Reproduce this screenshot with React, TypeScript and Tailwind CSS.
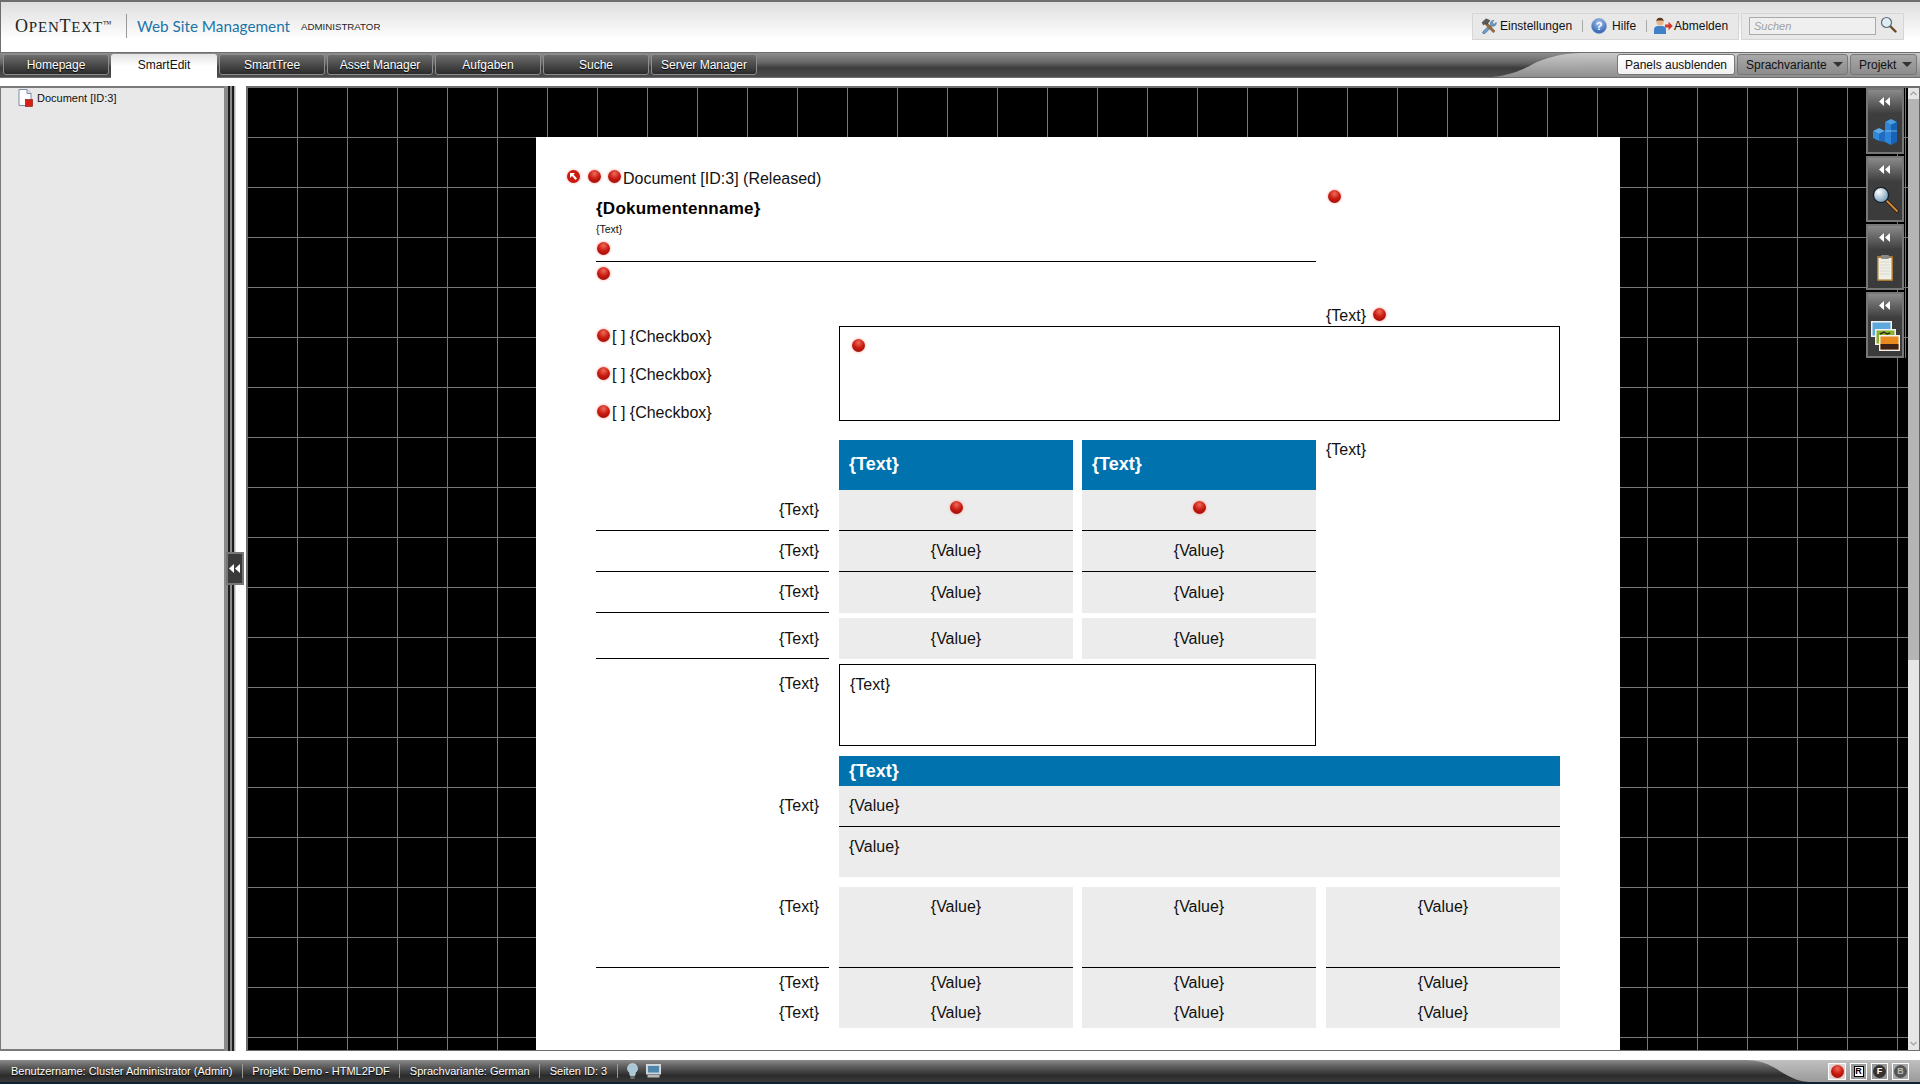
import React from 'react';

const tabs = ['Homepage', 'SmartEdit', 'SmartTree', 'Asset Manager', 'Aufgaben', 'Suche', 'Server Manager'];

const Dot: React.FC<{ className?: string }> = ({ className = '' }) => (
  <span
    className={`block h-[13px] w-[13px] shrink-0 rounded-full bg-[radial-gradient(circle_at_50%_28%,#ee6a58,#c81a10_48%,#8c0a05)] shadow-[0_0_3px_#ff9a90] ${className}`}
  />
);

const DoubleLeft: React.FC = () => (
  <svg width="12" height="9" viewBox="0 0 12 9" className="block">
    <polygon points="5,0 5,9 0,4.5" fill="#fff" />
    <polygon points="11,0 11,9 6,4.5" fill="#fff" />
  </svg>
);

const ToolsIcon = () => (
  <svg width="16" height="16" viewBox="0 0 16 16" className="block">
    <path d="M13 2.500 a3 3 0 0 0-3.500 3.800 L2 13.500 a1.300 1.300 0 0 0 2 2 l7.400-7.500 a3 3 0 0 0 3.800-3.600 l-2 1.800 -1.600-.6 -.3-1.600z" fill="#6d9cc8" stroke="#3f6a94" strokeWidth=".6" />
    <path d="M5.500 4 L14 13 l-1.600 1.800 L3.600 6z" fill="#9b6a3a" stroke="#5f3d1e" strokeWidth=".4" />
    <path d="M1 4.500 L5 .8 l4 1.600 -3 4 -1.600-1 -2 1.600z" fill="#5a5a5a" stroke="#2c2c2c" strokeWidth=".4" />
  </svg>
);

const HelpIcon = () => (
  <svg width="16" height="16" viewBox="0 0 16 16" className="block">
    <defs>
      <radialGradient id="hb" cx="50%" cy="30%" r="70%">
        <stop offset="0" stopColor="#a9c6ee" />
        <stop offset="1" stopColor="#2a5cb0" />
      </radialGradient>
    </defs>
    <circle cx="8" cy="8" r="7.500" fill="url(#hb)" stroke="#7f9cc8" strokeWidth=".6" />
    <text x="8" y="12" textAnchor="middle" fontSize="11" fontWeight="700" fontFamily="Liberation Sans" fill="#fff">?</text>
  </svg>
);

const LogoutIcon = () => (
  <svg width="20" height="18" viewBox="0 0 20 18" className="block">
    <circle cx="7" cy="5" r="3.600" fill="#e8b48c" />
    <path d="M3.400 4.400 a3.600 3.600 0 0 1 7.200 0 l-1 -.9 h-5z" fill="#5a3418" />
    <path d="M1 17 v-4 a4 4 0 0 1 4-4 h4 a4 4 0 0 1 4 4 v4z" fill="#3f82c8" />
    <path d="M12 7.500 h3.500 v-2.800 l4.300 4.300 -4.300 4.300 v-2.800 h-3.500z" fill="#d8382c" />
  </svg>
);

const SearchIcon = () => (
  <svg width="17" height="17" viewBox="0 0 17 17" className="block">
    <line x1="10" y1="10" x2="15.500" y2="15.500" stroke="#6b4a20" strokeWidth="2.400" strokeLinecap="round" />
    <circle cx="6.500" cy="6.500" r="5" fill="#dfeef5" stroke="#5e6e78" strokeWidth="1.200" />
  </svg>
);

const CubesIcon = () => (
  <svg width="26" height="28" viewBox="0 0 26 28" className="block">
    <polygon points="13,4 19,1 25,4 19,7" fill="#4aa0e8" />
    <polygon points="13,4 19,7 19,27 13,24" fill="#2f86d8" />
    <polygon points="19,7 25,4 25,24 19,27" fill="#1a62b4" />
    <polygon points="1,13 7,10 13,13 7,16" fill="#5aaaec" />
    <polygon points="1,13 7,16 7,23 1,20" fill="#3288d8" />
    <polygon points="7,16 13,13 13,24 7,23" fill="#1f6cc0" />
    <line x1="13" y1="13" x2="25" y2="13" stroke="#9fd0f5" strokeWidth=".7" />
  </svg>
);

const BigSearchIcon = () => (
  <svg width="28" height="28" viewBox="0 0 28 28" className="block">
    <defs>
      <radialGradient id="lens" cx="35%" cy="30%" r="75%">
        <stop offset="0" stopColor="#ffffff" />
        <stop offset="1" stopColor="#6f98b8" />
      </radialGradient>
    </defs>
    <line x1="16" y1="15" x2="26" y2="25" stroke="#2a1a08" strokeWidth="3.600" strokeLinecap="round" />
    <line x1="16" y1="15" x2="26" y2="25" stroke="#d08a3a" strokeWidth="2" strokeLinecap="round" />
    <circle cx="10" cy="9" r="7.600" fill="url(#lens)" stroke="#16222c" strokeWidth="1.400" />
  </svg>
);

const ClipboardIcon = () => (
  <svg width="18" height="28" viewBox="0 0 18 28" className="block">
    <rect x="1" y="2" width="16" height="25" rx="1" fill="#a97b32" />
    <rect x="2.500" y="4" width="13" height="21.500" fill="#f0efe6" />
    <path d="M4 8h10M4 11h10M4 14h10M4 17h10M4 20h10" stroke="#d4d4cc" strokeWidth=".8" />
    <rect x="5" y="1" width="8" height="4" rx="1" fill="#8a8a8a" />
  </svg>
);

const PhotosIcon = () => (
  <svg width="30" height="32" viewBox="0 0 30 32" className="block">
    <rect x="1" y="1" width="21" height="16" fill="#f2f2f2" />
    <rect x="2.500" y="2.500" width="18" height="13" fill="#5fa8dc" />
    <rect x="5" y="9" width="21" height="16" fill="#f2f2f2" />
    <rect x="6.500" y="10.500" width="18" height="13" fill="#8ab02e" />
    <path d="M10 14 l4-2 3 2 3 -1" stroke="#2c2c18" strokeWidth="1.400" fill="none" />
    <rect x="9" y="15" width="21" height="16" fill="#f2f2f2" />
    <rect x="10.500" y="16.500" width="18" height="13" fill="#e88a1e" />
    <rect x="10.500" y="24" width="18" height="5.500" fill="#3c2218" />
  </svg>
);

const DocIcon = () => (
  <svg width="15" height="18" viewBox="0 0 15 18" className="block">
    <path d="M1 .5 h8 l4 4 v12 h-12z" fill="#fff" stroke="#7f8aa8" />
    <path d="M9 .5 v4 h4" fill="#dfe3ec" stroke="#7f8aa8" />
    <rect x="7.500" y="10.500" width="7" height="7" fill="#d82015" stroke="#7a0e08" strokeWidth=".6" />
  </svg>
);

const BulbIcon = () => (
  <svg width="11" height="17" viewBox="0 0 11 17" className="block">
    <path d="M5.500 .5 a5 5 0 0 1 3 9 l-.6 3 h-4.800 l-.6-3 a5 5 0 0 1 3-9z" fill="#a8c8d8" stroke="#d8e4ea" strokeWidth=".6" />
    <rect x="3.500" y="13" width="4" height="3" fill="#6c6c6c" />
  </svg>
);

const MonitorIcon = () => (
  <svg width="15" height="14" viewBox="0 0 15 14" className="block">
    <rect x=".5" y=".5" width="14" height="9.500" fill="#bcd4e4" stroke="#d8d8d8" />
    <rect x="2" y="2" width="11" height="6.500" fill="#4f86ac" />
    <rect x="1.500" y="11" width="12" height="2.500" fill="#b8b8b8" />
  </svg>
);

const Label: React.FC<{ top: string; line?: boolean; className?: string }> = ({ top, line, className = '' }) => (
  <div className={`w-[233px] pr-[10px] text-right text-[16px] leading-[18px] ${top} ${line ? 'border-b border-black' : ''} ${className}`}>
    {'{Text}'}
  </div>
);

const Row: React.FC<{ className?: string; children: React.ReactNode }> = ({ className = '', children }) => (
  <div className={`grid grid-cols-[243px_243px_244px_234px] ${className}`}>{children}</div>
);

const Cell: React.FC<{ className?: string; children?: React.ReactNode }> = ({ className = '', children }) => (
  <div className={`w-[234px] bg-[#ececec] text-center text-[16px] leading-[18px] ${className}`}>{children}</div>
);

const Header = () => (
  <header className="flex h-[52px] shrink-0 items-center justify-between border-l border-t-2 border-[#6e6e6e] bg-gradient-to-b from-[#dedede] to-white to-75% pb-[2px] pl-[14px] pr-[16px]">
    <div className="flex items-center">
      <span className="flex w-[111px] items-baseline font-['Liberation_Serif',serif] text-[15px] leading-none tracking-[0.8px] text-[#222]">
        <span className="text-[18px]">O</span>PEN<span className="text-[18px]">T</span>EXT
        <span className="relative -top-[5px] text-[9px] leading-none tracking-normal">™</span>
      </span>
      <span className="h-[24px] w-px bg-[#999]" />
      <span className="ml-[10px] font-['Lato',sans-serif] text-[15.3px] text-[#1b75a8]">Web Site Management</span>
      <span className="ml-[11px] mt-[3px] text-[9.7px] text-[#222]">ADMINISTRATOR</span>
    </div>
    <div className="flex items-center gap-[2px]">
      <div className="flex h-[27px] w-[267px] items-center border border-[#d6d6d6] bg-[#e8e8e8] pl-[8px] text-[12px] text-[#111]">
        <ToolsIcon />
        <span className="ml-[3px]">Einstellungen</span>
        <span className="ml-[10px] h-[12px] w-px bg-[#aaa]" />
        <span className="ml-[8px]"><HelpIcon /></span>
        <span className="ml-[5px]">Hilfe</span>
        <span className="ml-[10px] h-[12px] w-px bg-[#aaa]" />
        <span className="ml-[6px]"><LogoutIcon /></span>
        <span className="ml-[1px]">Abmelden</span>
      </div>
      <div className="flex h-[27px] w-[163px] items-center border border-[#d6d6d6] bg-[#e8e8e8] pl-[7px]">
        <div className="flex h-[18px] w-[127px] items-center border border-[#aaa] bg-[#efefef] pl-[4px] text-[11px] italic text-[#a0a0a0]">
          Suchen
        </div>
        <span className="-mt-[4px] ml-[4px]"><SearchIcon /></span>
      </div>
    </div>
  </header>
);

const Nav = () => (
  <nav className="flex h-[26px] shrink-0 border-y border-[#6e6e6e] bg-[linear-gradient(to_bottom,#8e8e8e,#666_40%,#3c3c3c_62%,#4e4e4e)]">
    <div className="flex flex-1 gap-[2px] pl-[3px] pt-[1px]">
      {tabs.map((t) =>
        t === 'SmartEdit' ? (
          <div
            key={t}
            className="z-10 flex h-[25px] w-[106px] items-center justify-center rounded-t-[3px] bg-gradient-to-b from-[#e4e4e4] via-white to-white pb-[3px] text-[12px] text-[#111]"
          >
            {t}
          </div>
        ) : (
          <div
            key={t}
            className="flex h-[21px] w-[106px] items-center justify-center rounded-[3px] border border-[#8c8c8c] bg-gradient-to-b from-[#6e6e6e] to-[#2c2c2c] text-[12px] text-white [text-shadow:0_1px_1px_#000]"
          >
            {t}
          </div>
        )
      )}
    </div>
    <svg width="93" height="24" viewBox="0 0 93 24" preserveAspectRatio="none" className="block shrink-0">
      <defs>
        <linearGradient id="navSilver" x1="0" y1="0" x2="0" y2="1">
          <stop offset="0" stopColor="#c8c8c8" />
          <stop offset="1" stopColor="#8e8e8e" />
        </linearGradient>
      </defs>
      <path d="M93 0 C72 1 58 5 46 11 C32 19 16 24 0 24 L93 24 Z" fill="url(#navSilver)" />
    </svg>
    <div className="flex w-[340px] justify-end gap-[2px] bg-gradient-to-b from-[#c8c8c8] to-[#8e8e8e] pr-[3px] pt-[1px] text-[12px] text-[#111]">
      <div className="flex h-[21px] w-[118px] items-center justify-center rounded-[3px] border border-[#777] bg-gradient-to-b from-white to-[#f0f0f0]">
        Panels ausblenden
      </div>
      <div className="flex h-[21px] w-[111px] items-center justify-between rounded-[3px] border border-[#777] bg-gradient-to-b from-[#a8a8a8] to-[#8c8c8c] pl-[8px] pr-[4px]">
        Sprachvariante
        <span className="h-0 w-0 border-x-[5px] border-t-[5px] border-x-transparent border-t-[#333]" />
      </div>
      <div className="flex h-[21px] w-[67px] items-center justify-between rounded-[3px] border border-[#777] bg-gradient-to-b from-[#a8a8a8] to-[#8c8c8c] pl-[8px] pr-[4px]">
        Projekt
        <span className="h-0 w-0 border-x-[5px] border-t-[5px] border-x-transparent border-t-[#333]" />
      </div>
    </div>
  </nav>
);

const Sidebar = () => (
  <aside className="relative flex w-[236px] shrink-0">
    <div className="flex-1 border-y-2 border-l border-[#7a7a7a] bg-[#e8e8e8] pl-[17px] pt-[1px]">
      <div className="flex items-center">
        <DocIcon />
        <span className="ml-[4px] text-[11px] text-[#111]">Document [ID:3]</span>
      </div>
    </div>
    <div className="flex w-[12px] shrink-0">
      <span className="w-[4px] bg-[#8a8a8a]" />
      <span className="w-[2px] bg-[#1c1c1c]" />
      <span className="w-[2px] bg-[#8a8a8a]" />
      <span className="w-[2px] bg-[#1c1c1c]" />
      <span className="w-[2px] bg-gradient-to-r from-[#999] to-[#eee]" />
    </div>
    <div className="absolute left-[226px] top-[466px] flex h-[33px] w-[18px] items-center justify-center border-2 border-[#777] bg-[#3a3a3a]">
      <DoubleLeft />
    </div>
  </aside>
);

const Paper = () => (
  <div className="ml-[288px] h-full w-[1084px] bg-white pt-[33px] font-['Liberation_Sans',Arial,sans-serif] text-[#111]">
    <div className="flex h-[18px] items-center pl-[31px]">
      <span className="relative -top-[3px] flex h-[13px] w-[13px] items-center justify-center rounded-full bg-[#c81a10] shadow-[0_0_3px_#ff9a90]">
        <svg width="7" height="7" viewBox="0 0 7 7" className="block">
          <path d="M0 0h5L3.500 1.500 7 5.500 5.500 7 2 3 0 5z" fill="#fff" />
        </svg>
      </span>
      <Dot className="relative -top-[3px] ml-[8px]" />
      <Dot className="relative -top-[3px] ml-[7px]" />
      <span className="ml-[2px] text-[16px] leading-[18px]">Document [ID:3] (Released)</span>
    </div>

    <div className="pl-[60px]">
      <div className="flex">
        <div className="w-[720px]">
          <div className="mt-[12px] text-[17px] font-bold leading-[18px] tracking-[0.25px] text-black">{'{Dokumentenname}'}</div>
          <div className="mt-[5px] text-[10.5px] leading-[12px]">{'{Text}'}</div>
          <Dot className="ml-[1px] mt-[7px]" />
          <div className="mt-[6px] border-b border-black" />
          <Dot className="ml-[1px] mt-[5px]" />
        </div>
        <div className="ml-[10px] flex h-[138px] w-[234px] flex-col justify-between">
          <Dot className="ml-[2px] mt-[2px]" />
          <div className="mb-[1px] flex items-center text-[16px] leading-[18px]">
            {'{Text}'}
            <Dot className="relative -top-[2px] ml-[7px]" />
          </div>
        </div>
      </div>

      <div className="flex">
        <div className="flex w-[243px] flex-col gap-[20px] pt-[2px]">
          {[0, 1, 2].map((i) => (
            <div key={i} className="flex h-[18px] items-center text-[16px] leading-[18px]">
              <Dot className="relative -top-[2px] ml-[1px]" />
              <span className="ml-[2px]">[ ] {'{Checkbox}'}</span>
            </div>
          ))}
        </div>
        <div className="h-[95px] w-[721px] border border-black pl-[12px] pt-[12px]">
          <Dot />
        </div>
      </div>

      <div className="mt-[18px]">
        <Row className="h-[50px]">
          <div />
          <div className="w-[234px] bg-[#0073ae] pl-[10px] pt-[14px] text-[18px] font-bold leading-[20px] text-white">{'{Text}'}</div>
          <div className="w-[234px] bg-[#0073ae] pl-[10px] pt-[14px] text-[18px] font-bold leading-[20px] text-white">{'{Text}'}</div>
          <div className="pt-[1px] text-[16px] leading-[18px]">{'{Text}'}</div>
        </Row>
        <Row className="h-[41px]">
          <Label top="pt-[11px]" line />
          <Cell className="border-b border-black pt-[11px]"><Dot className="mx-auto" /></Cell>
          <Cell className="border-b border-black pt-[11px]"><Dot className="mx-auto" /></Cell>
        </Row>
        <Row className="h-[41px]">
          <Label top="pt-[11px]" line />
          <Cell className="border-b border-black pt-[11px]">{'{Value}'}</Cell>
          <Cell className="border-b border-black pt-[11px]">{'{Value}'}</Cell>
        </Row>
        <Row className="h-[41px]">
          <Label top="pt-[11px]" line />
          <Cell className="pt-[12px]">{'{Value}'}</Cell>
          <Cell className="pt-[12px]">{'{Value}'}</Cell>
        </Row>
        <Row className="h-[46px]">
          <Label top="pt-[17px]" line />
          <Cell className="mt-[5px] pt-[12px]">{'{Value}'}</Cell>
          <Cell className="mt-[5px] pt-[12px]">{'{Value}'}</Cell>
        </Row>
        <Row className="h-[87px]">
          <Label top="pt-[16px]" />
          <div className="col-span-2 mt-[5px] h-[82px] w-[477px] border border-black pl-[10px] pt-[11px] text-[16px] leading-[18px]">{'{Text}'}</div>
        </Row>
        <Row className="mt-[10px]">
          <Label top="pt-[41px]" />
          <div className="col-span-3 w-[721px] text-[16px] leading-[18px]">
            <div className="h-[30px] bg-[#0073ae] pl-[10px] pt-[5px] text-[18px] font-bold leading-[20px] text-white">{'{Text}'}</div>
            <div className="h-[41px] border-b border-black bg-[#ececec] pl-[10px] pt-[11px]">{'{Value}'}</div>
            <div className="h-[50px] bg-[#ececec] pl-[10px] pt-[11px]">{'{Value}'}</div>
          </div>
        </Row>
        <Row className="mt-[10px] h-[81px]">
          <Label top="pt-[11px]" line />
          <Cell className="border-b border-black pt-[11px]">{'{Value}'}</Cell>
          <Cell className="border-b border-black pt-[11px]">{'{Value}'}</Cell>
          <Cell className="border-b border-black pt-[11px]">{'{Value}'}</Cell>
        </Row>
        <Row className="h-[60px]">
          <div className="w-[233px] pr-[10px] pt-[6px] text-right text-[16px] leading-[18px]">
            <div>{'{Text}'}</div>
            <div className="mt-[12px]">{'{Text}'}</div>
          </div>
          {[0, 1, 2].map((i) => (
            <Cell key={i} className="pt-[6px]">
              <div>{'{Value}'}</div>
              <div className="mt-[12px]">{'{Value}'}</div>
            </Cell>
          ))}
        </Row>
      </div>
    </div>
  </div>
);

const sidePanels = [<CubesIcon />, <BigSearchIcon />, <ClipboardIcon />, <PhotosIcon />];

const SidePanels = () => (
  <div className="absolute right-[2px] top-0 flex w-[40px] flex-col gap-[2px] border-r border-[#777] pr-[1px]">
    {sidePanels.map((icon, i) => (
      <div
        key={i}
        className="flex h-[66px] w-[38px] flex-col items-center border-2 border-[#777] bg-[linear-gradient(to_bottom,#8a8a8a,#3e3e3e_38%,#3a3a3a)] pt-[7px]"
      >
        <DoubleLeft />
        <div className="mt-[8px] flex h-[36px] items-center justify-center">{icon}</div>
      </div>
    ))}
  </div>
);

const Scrollbar = () => (
  <div className="flex w-[12px] shrink-0 flex-col border-r border-[#666]">
    <div className="flex h-[11px] items-center justify-center bg-[#e6e6e6]">
      <svg width="7" height="5" viewBox="0 0 7 5" className="block">
        <path d="M.5 4 L3.500 1 L6.500 4" stroke="#a0a0a0" strokeWidth="1.200" fill="none" />
      </svg>
    </div>
    <div className="h-[561px] bg-[#b5b5b5]" />
    <div className="flex flex-1 flex-col justify-end bg-[#e6e6e6] pb-[4px]">
      <svg width="7" height="5" viewBox="0 0 7 5" className="mx-auto block">
        <path d="M.5 1 L3.500 4 L6.500 1" stroke="#a0a0a0" strokeWidth="1.200" fill="none" />
      </svg>
    </div>
  </div>
);

const Workspace = () => (
  <div className="ml-[10px] flex flex-1 border-y-2 border-l-2 border-[#6e6e6e] [border-bottom-width:1px]">
    <div className="relative flex-1 overflow-hidden bg-black bg-[linear-gradient(to_right,transparent_49px,#777_49px),linear-gradient(to_bottom,transparent_49px,#777_49px)] bg-[size:50px_50px] pt-[49px]">
      <Paper />
      <SidePanels />
    </div>
    <Scrollbar />
  </div>
);

const StatusBar = () => (
  <footer className="flex h-[24px] shrink-0 flex-col">
    <div className="flex h-[22px] bg-[linear-gradient(to_bottom,#8a8a8a,#5e5e5e_30%,#2c2c2c_70%,#3a3a3a)]">
      <div className="flex flex-1 items-center pl-[11px] text-[11px] text-white [text-shadow:0_1px_1px_#000]">
        <span>Benutzername: Cluster Administrator (Admin)</span>
        <span className="mx-[9.5px] h-[14px] w-px bg-[#999]" />
        <span>Projekt: Demo - HTML2PDF</span>
        <span className="mx-[9.5px] h-[14px] w-px bg-[#999]" />
        <span>Sprachvariante: German</span>
        <span className="mx-[9.5px] h-[14px] w-px bg-[#999]" />
        <span>Seiten ID: 3</span>
        <span className="mx-[9.5px] h-[14px] w-px bg-[#999]" />
        <BulbIcon />
        <span className="ml-[8px]"><MonitorIcon /></span>
      </div>
      <svg width="67" height="22" viewBox="0 0 67 22" preserveAspectRatio="none" className="block shrink-0">
        <defs>
          <linearGradient id="stSilver" x1="0" y1="0" x2="0" y2="1">
            <stop offset="0" stopColor="#c0c0c0" />
            <stop offset="1" stopColor="#9a9a9a" />
          </linearGradient>
        </defs>
        <path d="M0 0 C22 0 30 7 40 13 C48 18 58 22 67 22 L67 0 Z" fill="url(#stSilver)" />
      </svg>
      <div className="flex w-[110px] items-center gap-[4px] bg-gradient-to-b from-[#c0c0c0] to-[#9a9a9a] pl-[18px]">
        <div className="flex h-[17px] w-[18px] items-center justify-center border border-white bg-[#ddd]">
          <Dot />
        </div>
        <div className="flex h-[17px] w-[17px] items-center justify-center border border-white bg-[#999]">
          <span className="flex h-[11px] w-[10px] items-center justify-center border border-black bg-white text-[9px] font-bold leading-none text-black">R</span>
        </div>
        <div className="flex h-[17px] w-[17px] items-center justify-center border border-white bg-[#999]">
          <span className="flex h-[13px] w-[13px] items-center justify-center rounded-full bg-[#333] text-[9px] font-bold leading-none text-white">F</span>
        </div>
        <div className="flex h-[17px] w-[17px] items-center justify-center border border-white bg-[#aaa]">
          <span className="flex h-[13px] w-[13px] items-center justify-center rounded-full bg-[#555] text-[9px] font-bold leading-none text-[#bbb]">B</span>
        </div>
      </div>
    </div>
    <div className="h-[2px] bg-[#0d2233]" />
  </footer>
);

const App: React.FC = () => (
  <div className="flex h-[1084px] w-[1920px] flex-col overflow-hidden bg-white font-['Liberation_Sans',Arial,sans-serif]">
    <Header />
    <Nav />
    <main className="mt-[8px] flex h-[965px] shrink-0">
      <Sidebar />
      <Workspace />
    </main>
    <div className="h-[9px] shrink-0" />
    <StatusBar />
  </div>
);

export default App;
